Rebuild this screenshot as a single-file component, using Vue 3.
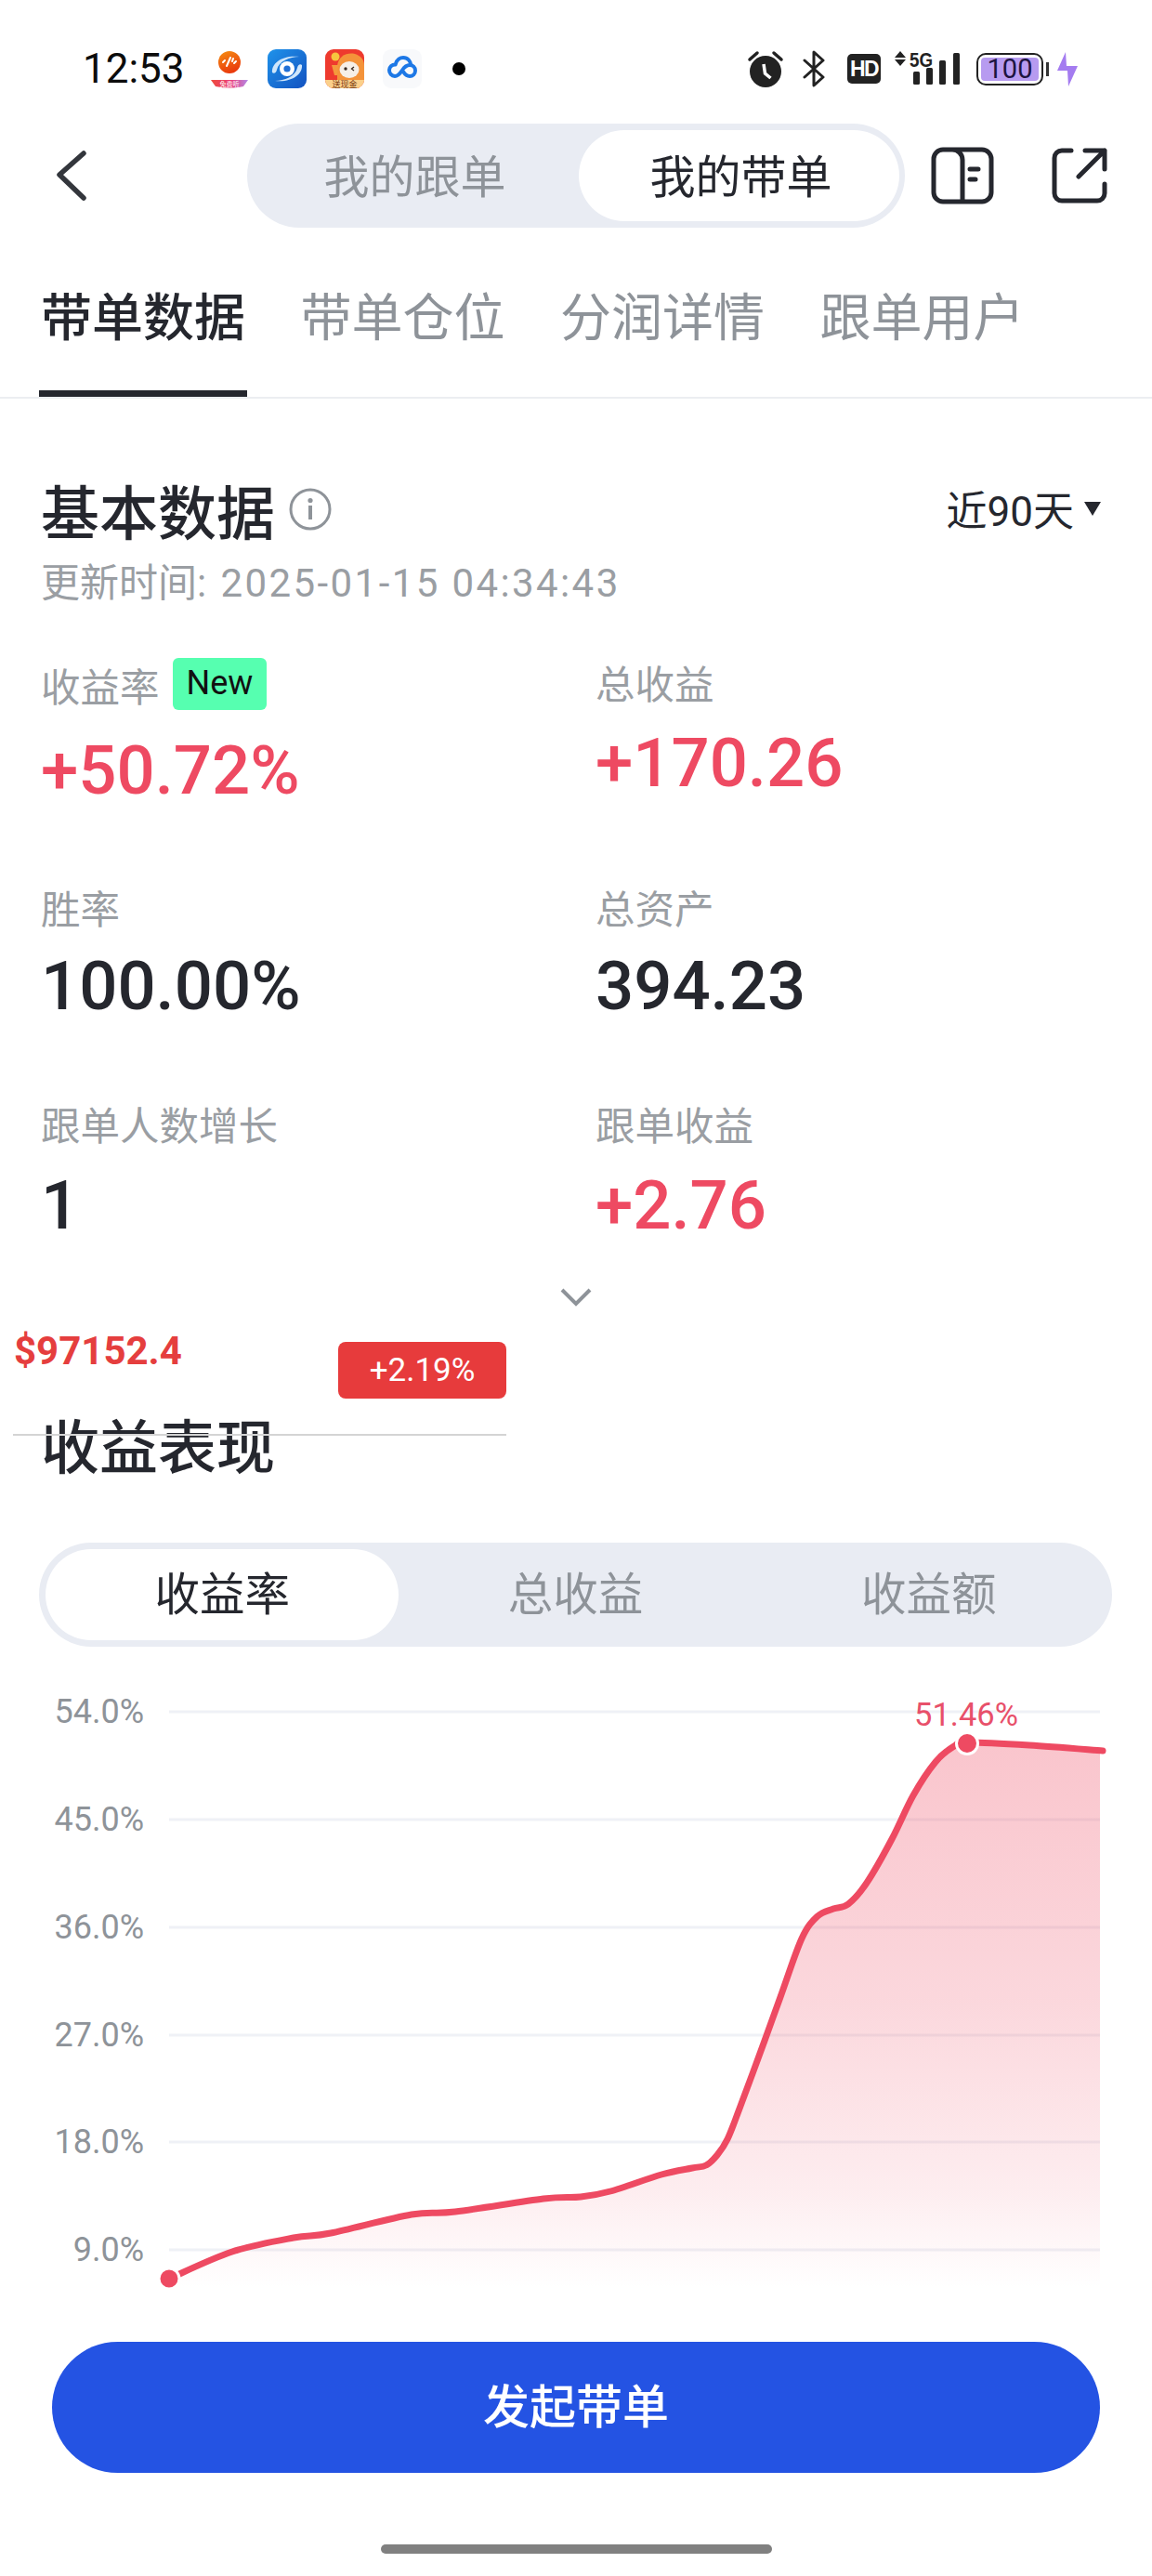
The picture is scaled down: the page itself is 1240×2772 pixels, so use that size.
<template>
  <div class="page">
    <div class="status-bar">
      <span class="clock">12:53</span>
      <svg class="app-icon first" width="42" height="42" viewBox="0 0 42 42">
        <defs>
          <linearGradient id="orangeBall" x1="0.2" y1="0" x2="0.6" y2="1">
            <stop offset="0" stop-color="#f58a12" />
            <stop offset="1" stop-color="#e9360c" />
          </linearGradient>
          <linearGradient id="ribbon" x1="0" y1="0" x2="1" y2="0">
            <stop offset="0" stop-color="#ee4a3a" />
            <stop offset="0.55" stop-color="#ea3f7e" />
            <stop offset="1" stop-color="#b48ae8" />
          </linearGradient>
        </defs>
        <circle cx="21" cy="14" r="12" fill="url(#orangeBall)" />
        <path d="M14 14l2-2M18 18l4-9M24 13l1-3M26 15l2-2" stroke="#fff" stroke-width="2" stroke-linecap="round" fill="none" />
        <path d="M1 33h40l-5 7q-15 3-30 0z" fill="url(#ribbon)" />
        <text x="21" y="39.500" class="micro-text light">免费听</text>
      </svg>
      <svg class="app-icon" width="42" height="42" viewBox="0 0 42 42">
        <defs>
          <linearGradient id="blueTile" x1="0" y1="0" x2="1" y2="1">
            <stop offset="0" stop-color="#1f93ea" />
            <stop offset="1" stop-color="#1352c0" />
          </linearGradient>
        </defs>
        <rect width="42" height="42" rx="9" fill="url(#blueTile)" />
        <path d="M5 25C4 15 16 6 34 8 24 8 12 13 10 22c-.5 3-3 5-5 3zM37 17c1 10-11 19-29 17 10 0 22-5 24-14 .5-3 3-5 5-3z" fill="#cfe6fb" />
        <circle cx="21" cy="21" r="8" fill="#fff" />
        <circle cx="21" cy="21" r="3.600" fill="#1f6fd6" />
      </svg>
      <svg class="app-icon" width="42" height="42" viewBox="0 0 42 42">
        <rect width="42" height="42" rx="9" fill="#ee3a2e" />
        <path d="M13 42V18C14 7 24 3 32 5c6 2 10 6 10 12v16l-6 9z" fill="#f4933a" />
        <circle cx="11" cy="8" r="4.500" fill="#f7c53e" />
        <path d="M7 17l3 11h3l1-11z" fill="#f49a3c" />
        <ellipse cx="26" cy="22" rx="10.500" ry="9" fill="#f6efe7" />
        <circle cx="22" cy="21" r="1.700" fill="#3a2b22" />
        <path d="M31 19l-2.500 2 2.500 2" stroke="#3a2b22" stroke-width="1.300" fill="none" />
        <path d="M0 33h42v0a9 9 0 0 1-9 9H9a9 9 0 0 1-9-9z" fill="#fbd08b" />
        <text x="21" y="40.500" class="micro-text dark">送现金</text>
      </svg>
      <svg class="app-icon" width="42" height="42" viewBox="0 0 42 42">
        <rect width="42" height="42" rx="9" fill="#f8f9fb" />
        <path d="M13 29a6.300 6.300 0 1 1 .6-12.600M13.600 16.400C15 11 19 9 22 9c5 0 8 4 8.300 8M13 29c4 0 6-3.500 8-6.500s4-5.500 8-5.500a6 6 0 1 1 0 12c-4 0-5.500-2.500-7-5" fill="none" stroke="#1d78e6" stroke-width="4" stroke-linecap="round" />
      </svg>
      <span class="status-dot"></span>

      <svg class="sys-icon alarm" width="40" height="42" viewBox="0 0 40 42">
        <circle cx="20" cy="24" r="17" fill="#222" />
        <path d="M3 11L11 4M37 11L29 4" stroke="#222" stroke-width="3.500" stroke-linecap="round" />
        <path d="M18 16l1.500 10 6 5" stroke="#fff" stroke-width="3.500" fill="none" />
      </svg>
      <svg class="sys-icon bluetooth" width="24" height="40" viewBox="0 0 24 40">
        <path d="M2 11l20 18-10 9V2l10 9L2 29" fill="none" stroke="#222" stroke-width="3" stroke-linejoin="round" stroke-linecap="round" />
      </svg>
      <div class="hd-chip">HD</div>
      <svg class="sys-icon network" width="70" height="46" viewBox="0 -4 70 46">
        <path d="M0 7L6 0l6 7zM0 9l6 7 6-7z" fill="#222" />
        <text x="16" y="17" class="five-g" textLength="25" lengthAdjust="spacingAndGlyphs">5G</text>
        <rect x="20" y="22" width="7" height="14" rx="1.500" fill="#222" />
        <rect x="34" y="18" width="7" height="18" rx="1.500" fill="#222" />
        <rect x="48" y="10" width="7" height="26" rx="1.500" fill="#222" />
        <rect x="63" y="2" width="7" height="34" rx="1.500" fill="#222" />
      </svg>
      <div class="battery">
        <div class="battery-body"><span class="battery-fill">100</span></div>
        <span class="battery-tip"></span>
      </div>
      <svg class="sys-icon bolt" width="22" height="37" viewBox="0 0 22 37">
        <path d="M9 0l1 15h12L12 37l-1-17H0z" fill="#a47cf0" />
      </svg>
    </div>

    <div class="nav-row">
      <svg class="back" width="34" height="54" viewBox="0 0 34 54">
        <path d="M30 3L4 26l26 25" fill="none" stroke="#33363c" stroke-width="5.500" stroke-linecap="round" stroke-linejoin="round" />
      </svg>
      <div class="role-switch">
        <div class="role-item">我的跟单</div>
        <div class="role-item active">我的带单</div>
      </div>
      <svg class="book" width="68" height="62" viewBox="0 0 68 62">
        <path d="M23 3H13A10 10 0 0 0 3 13v36a10 10 0 0 0 10 10h42a10 10 0 0 0 10-10V13A10 10 0 0 0 55 3H23a11 11 0 0 1 11 11v45" fill="none" stroke="#25272e" stroke-width="5" stroke-linejoin="round" />
        <path d="M42 24h9M42 35h6" stroke="#25272e" stroke-width="5" stroke-linecap="round" />
      </svg>
      <svg class="share" width="60" height="60" viewBox="0 0 60 60">
        <path d="M21 3H11a8 8 0 0 0-8 8v38a8 8 0 0 0 8 8h38a8 8 0 0 0 8-8V39" fill="none" stroke="#25272e" stroke-width="5" stroke-linecap="round" />
        <path d="M29 31L57 3M36 3h21v20" fill="none" stroke="#25272e" stroke-width="5" stroke-linecap="round" stroke-linejoin="round" />
      </svg>
    </div>

    <div class="tabs">
      <div v-for="(tab, i) in tabs" :key="tab" class="tab" :class="{ active: i === 0 }">{{ tab }}</div>
    </div>

    <div class="basic">
      <div class="basic-head">
        <div class="basic-title">
          <h2>基本数据</h2>
          <svg class="info" width="48" height="48" viewBox="0 0 48 48">
            <circle cx="24" cy="24" r="21" fill="none" stroke="#8e9399" stroke-width="3" />
            <circle cx="24" cy="14.500" r="2.600" fill="#8e9399" />
            <rect x="22" y="20" width="4" height="15" fill="#8e9399" />
          </svg>
        </div>
        <div class="range">近90天<span class="caret"></span></div>
      </div>
      <p class="updated">更新时间: <span class="stamp">2025-01-15 04:34:43</span></p>

      <div class="stats">
        <div v-for="stat in stats" :key="stat.label" class="stat" :class="stat.cls">
          <div class="stat-label">
            {{ stat.label }}<span v-if="stat.isNew" class="new-tag">New</span>
          </div>
          <div class="stat-value" :class="{ up: stat.up }">{{ stat.value }}</div>
        </div>
      </div>

      <svg class="expand" width="36" height="22" viewBox="0 0 36 22">
        <path d="M3 3l15 15L33 3" fill="none" stroke="#8e9399" stroke-width="4" />
      </svg>
    </div>

    <div class="performance">
      <span class="ticker-price">$97152.4</span>
      <span class="ticker-change">+2.19%</span>
      <span class="ticker-line"></span>

      <h2 class="perf-title">收益表现</h2>
      <div class="metric-switch">
        <div v-for="(m, i) in metrics" :key="m" class="metric" :class="{ active: i === 0 }">{{ m }}</div>
      </div>

      <svg class="chart" width="1240" height="660" viewBox="0 1820 1240 660">
        <defs>
          <linearGradient id="areaFill" gradientUnits="userSpaceOnUse" x1="0" y1="1876" x2="0" y2="2463">
            <stop offset="0" stop-color="#ee4a62" stop-opacity="0.32" />
            <stop offset="0.47" stop-color="#ee4a62" stop-opacity="0.22" />
            <stop offset="0.82" stop-color="#ee4a62" stop-opacity="0.1" />
            <stop offset="1" stop-color="#ee4a62" stop-opacity="0" />
          </linearGradient>
        </defs>
        <g v-for="tick in ticks" :key="tick.label">
          <line x1="182" x2="1184" :y1="tick.y" :y2="tick.y" stroke="#eff1f6" stroke-width="3" />
          <text x="155" :y="tick.y + 12" class="axis-label">{{ tick.label }}</text>
        </g>
        <path :d="areaPath" fill="url(#areaFill)" />
        <path :d="linePath" fill="none" stroke="#ee4a62" stroke-width="7" stroke-linecap="round" stroke-linejoin="round" />
        <circle cx="182" cy="2453" r="11" fill="#ee4a62" stroke="#fff" stroke-width="3" />
        <circle cx="1041" cy="1877" r="11.500" fill="#ee4a62" stroke="#fff" stroke-width="3" />
        <text x="1040" y="1858" class="peak-label">51.46%</text>
      </svg>

      <button class="start-btn">发起带单</button>
      <div class="home-bar"></div>
    </div>
  </div>
</template>

<script setup>
import { computed } from 'vue'

const tabs = ['带单数据', '带单仓位', '分润详情', '跟单用户']
const metrics = ['收益率', '总收益', '收益额']

const stats = [
  { label: '收益率', value: '+50.72%', up: true, isNew: true, cls: 'lead' },
  { label: '总收益', value: '+170.26', up: true, cls: 'side' },
  { label: '胜率', value: '100.00%', cls: 'mid' },
  { label: '总资产', value: '394.23', cls: 'mid' },
  { label: '跟单人数增长', value: '1' },
  { label: '跟单收益', value: '+2.76', up: true }
]

const ticks = [
  { label: '54.0%', y: 1843 },
  { label: '45.0%', y: 1959 },
  { label: '36.0%', y: 2075 },
  { label: '27.0%', y: 2191 },
  { label: '18.0%', y: 2306 },
  { label: '9.0%', y: 2422 }
]

const curve = [
  [182, 2453], [250, 2424], [316, 2409], [356, 2404], [443, 2384], [490, 2381],
  [585, 2367], [625, 2365], [657, 2359], [712, 2341], [745, 2334], [760, 2331],
  [772, 2320], [783, 2303], [796, 2270], [823, 2197], [840, 2150], [863, 2087],
  [880, 2063], [897, 2055], [913, 2050], [933, 2027], [960, 1980], [983, 1933],
  [1007, 1897], [1027, 1880], [1041, 1876], [1108, 1879], [1187, 1885]
]

// catmull-rom through the sampled points
const smooth = (pts) => {
  let d = `M${pts[0][0]},${pts[0][1]}`
  for (let i = 0; i < pts.length - 1; i++) {
    const p0 = pts[i - 1] || pts[i]
    const p1 = pts[i]
    const p2 = pts[i + 1]
    const p3 = pts[i + 2] || p2
    const c1x = p1[0] + (p2[0] - p0[0]) / 6
    const c1y = p1[1] + (p2[1] - p0[1]) / 6
    const c2x = p2[0] - (p3[0] - p1[0]) / 6
    const c2y = p2[1] - (p3[1] - p1[1]) / 6
    d += `C${c1x.toFixed(1)},${c1y.toFixed(1)} ${c2x.toFixed(1)},${c2y.toFixed(1)} ${p2[0]},${p2[1]}`
  }
  return d
}

const linePath = computed(() => smooth(curve))
const areaPath = computed(() => {
  const pts = curve.slice(0, -1).concat([[1184, 1885]])
  return `${smooth(pts)}L1184,2463L182,2463Z`
})
</script>

<style scoped>
.page {
  position: relative;
  width: 1240px;
  height: 2772px;
  overflow: hidden;
  background: #fff;
  color: #25272e;
  font-family: Roboto, "Noto Sans CJK SC", sans-serif;
}

h2,
p {
  margin: 0;
  font-weight: 500;
}

.status-bar {
  display: flex;
  align-items: center;
  height: 133px;
  padding: 15px 80px 0 89px;
  box-sizing: border-box;
}

.clock {
  font-size: 44px;
  color: #0c0c0c;
  width: 108px;
}

.app-icon {
  margin-left: 20px;
}

.app-icon.first {
  margin-left: 29px;
}

.micro-text {
  font-size: 7px;
  text-anchor: middle;
  font-family: "Noto Sans CJK SC", sans-serif;
}

.micro-text.light {
  fill: #fff;
}

.micro-text.dark {
  font-size: 9px;
  fill: #7a3a12;
}

.status-dot {
  width: 14px;
  height: 14px;
  border-radius: 50%;
  background: #000;
  margin-left: 33px;
}

.alarm {
  margin-left: auto;
}

.bluetooth {
  margin-left: 20px;
}

.hd-chip {
  width: 36px;
  height: 32px;
  margin-left: 24px;
  border-radius: 5px;
  background: #222;
  color: #fff;
  font: 700 23px/32px "Liberation Sans", sans-serif;
  text-align: center;
  letter-spacing: -1.5px;
}

.network {
  margin-left: 15px;
}

.five-g {
  font: 700 22px "Liberation Sans", sans-serif;
  fill: #222;
}

.battery {
  display: flex;
  align-items: center;
  margin-left: 18px;
}

.battery-body {
  width: 72px;
  height: 35px;
  box-sizing: border-box;
  border: 2.5px solid #222;
  border-radius: 10px;
  padding: 3px;
}

.battery-fill {
  display: block;
  height: 100%;
  border-radius: 4px;
  background: #b79bf0;
  color: #1d1440;
  font-size: 29px;
  line-height: 24px;
  text-align: center;
}

.battery-tip {
  width: 3px;
  height: 15px;
  margin-left: 3px;
  background: #333;
}

.bolt {
  margin-left: 9px;
}

.nav-row {
  position: relative;
  display: flex;
  align-items: center;
  height: 112px;
  padding-left: 60px;
}

.back {
  flex: none;
}

.role-switch {
  display: flex;
  width: 708px;
  height: 112px;
  margin-left: 172px;
  box-sizing: border-box;
  padding: 7px 6px 7px 0;
  border-radius: 56px;
  background: #e9ecf3;
  font-size: 49px;
}

.role-item {
  flex: 1;
  display: flex;
  align-items: center;
  justify-content: center;
  padding: 0 0 5px 4px;
  box-sizing: border-box;
  color: #8e9399;
  border-radius: 49px;
}

.role-item.active {
  flex: none;
  width: 345px;
  background: #fff;
  color: #25272e;
}

.book {
  margin-left: 28px;
  flex: none;
}

.share {
  margin-left: 62px;
  flex: none;
}

.tabs {
  display: flex;
  gap: 59.5px;
  height: 184px;
  box-sizing: border-box;
  padding: 62px 0 0 44px;
  border-bottom: 2px solid #eceef1;
}

.tab {
  height: 120px;
  font-size: 55px;
  line-height: 70px;
  color: #8e9399;
  box-sizing: border-box;
}

.tab.active {
  margin: 0 -2px;
  padding: 0 2px;
  color: #25272e;
  font-weight: 500;
  border-bottom: 7px solid #25272e;
}

.basic {
  padding: 0 44px;
}

.basic-head {
  display: flex;
  align-items: center;
  justify-content: space-between;
  margin-top: 90px;
  height: 70px;
}

.basic-title {
  display: flex;
  align-items: center;
  gap: 14px;
}

.basic-title h2 {
  font-size: 63px;
  line-height: 70px;
}

.info {
  margin-top: -12px;
}

.range {
  display: flex;
  align-items: center;
  font-size: 44px;
  margin-top: -14px;
  margin-right: 11px;
}

.caret {
  width: 0;
  height: 0;
  margin-left: 11px;
  border-left: 9px solid transparent;
  border-right: 9px solid transparent;
  border-top: 15px solid #25272e;
}

.updated {
  margin-top: 14px;
  font-size: 42px;
  line-height: 50px;
  font-weight: 400;
  color: #9a9ea3;
}

.stamp {
  margin-left: 5px;
  letter-spacing: 2.4px;
}

.stats {
  display: grid;
  grid-template-columns: 597px 1fr;
  grid-auto-rows: 236px;
  margin-top: 55px;
}

.stat-label {
  display: flex;
  align-items: center;
  height: 56px;
  font-size: 42.5px;
  color: #9a9ea3;
}

.new-tag {
  display: inline-block;
  margin-left: 14px;
  padding: 0 15px;
  height: 56px;
  border-radius: 6px;
  background: #56ffb0;
  color: #111;
  font-size: 36px;
  line-height: 54px;
}

.stat-value {
  margin-top: 20px;
  font-size: 72.5px;
  line-height: 84px;
  font-weight: 500;
}

.stat-value.up {
  color: #ee4a62;
}

.lead .stat-value {
  margin-top: 24px;
}

.side .stat-label {
  margin-top: -3px;
}

.side .stat-value {
  margin-top: 19px;
}

.mid .stat-label {
  margin-top: 3px;
}

.mid .stat-value {
  margin-top: 17px;
}

.expand {
  display: block;
  margin: -31px auto 12px;
}

.performance {
  position: relative;
  padding-top: 104px;
}

.ticker-price {
  position: absolute;
  left: 15px;
  top: 10px;
  font-size: 42px;
  line-height: 50px;
  font-weight: 700;
  color: #e53e3e;
}

.ticker-change {
  position: absolute;
  left: 364px;
  top: 25px;
  width: 181px;
  height: 61px;
  border-radius: 8px;
  background: #e73b3c;
  color: #fff;
  font-size: 35px;
  line-height: 61px;
  text-align: center;
}

.ticker-line {
  position: absolute;
  left: 14px;
  top: 124px;
  width: 531px;
  height: 2px;
  background: #d4d4d4;
}

.perf-title {
  margin-left: 44px;
  font-size: 63px;
  line-height: 72px;
}

.metric-switch {
  display: flex;
  height: 112px;
  margin: 65px 43px 0 42px;
  padding: 7px;
  box-sizing: border-box;
  border-radius: 56px;
  background: #e9ecf3;
}

.metric {
  flex: 1;
  display: flex;
  align-items: center;
  justify-content: center;
  padding-bottom: 8px;
  box-sizing: border-box;
  font-size: 48.5px;
  color: #8e9399;
  border-radius: 49px;
}

.metric.active {
  background: #fff;
  color: #25272e;
}

.chart {
  display: block;
  margin-top: 47px;
}

.axis-label {
  font-size: 36px;
  fill: #8e9399;
  text-anchor: end;
}

.peak-label {
  font-size: 34.5px;
  fill: #e8506a;
  text-anchor: middle;
}

.start-btn {
  display: block;
  width: 1128px;
  height: 141px;
  margin: 41px 0 0 56px;
  padding: 0 0 10px;
  border: none;
  border-radius: 71px;
  background: #2453e3;
  color: #fff;
  font-family: inherit;
  font-size: 50px;
  font-weight: 500;
}

.home-bar {
  width: 421px;
  height: 10px;
  margin: 77px 0 0 410px;
  border-radius: 5px;
  background: #808080;
}
</style>
